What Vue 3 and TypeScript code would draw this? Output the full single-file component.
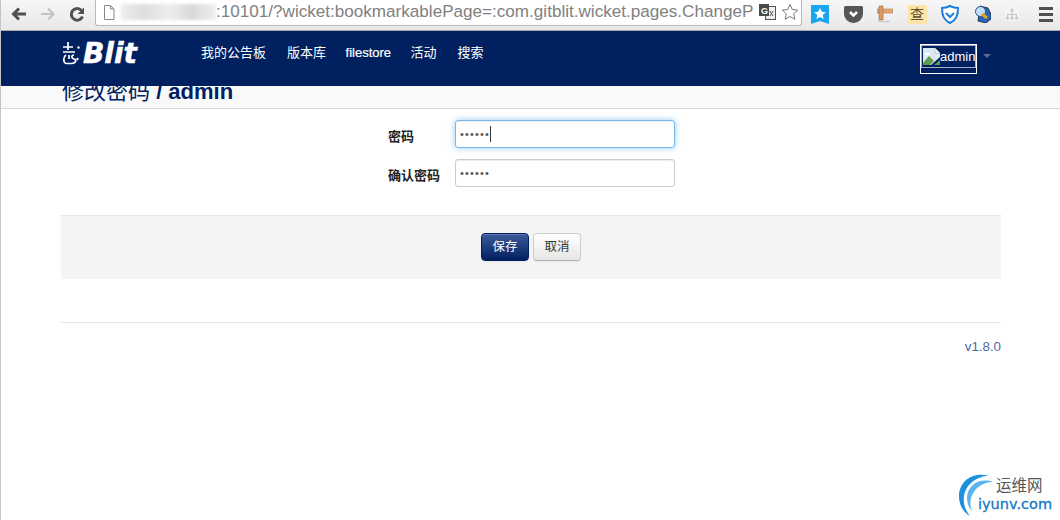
<script setup lang="ts">
const navItems: string[] = ['我的公告板', '版本库', 'filestore', '活动', '搜索']
</script>

<template>
  <div class="page">
    <div class="toolbar">
      <div class="navbtns">
        <svg width="20" height="20" viewBox="0 0 20 20"><path d="M17 10H5M10 4.500 4.500 10l5.500 5.500" fill="none" stroke="#505050" stroke-width="3"/></svg>
        <svg width="20" height="20" viewBox="0 0 20 20"><path d="M3 10h12M10 4.500l5.500 5.500-5.500 5.500" fill="none" stroke="#c4c4c4" stroke-width="2.200"/></svg>
        <svg width="20" height="20" viewBox="0 0 20 20"><path d="M15.500 12.500a5.800 5.800 0 1 1-1-6" fill="none" stroke="#505050" stroke-width="3"/><path d="M17 3.500v6.500h-6.500z" fill="#505050"/></svg>
      </div>
      <div class="omnibox">
        <svg class="page-ico" width="12" height="15" viewBox="0 0 12 15"><path d="M1.500.5h6l3.500 3.500v10.500h-9.500zM7.500.5V4H11" fill="#fff" stroke="#888"/></svg>
        <span class="blur"></span>
        <span class="url">:10101/?wicket:bookmarkablePage=:com.gitblit.wicket.pages.ChangeP</span>
        <svg class="trans" width="17" height="16" viewBox="0 0 17 16"><rect x="6.500" y="2.500" width="10" height="13" fill="#eee" stroke="#555"/><rect x="0" y="0" width="10" height="12" fill="#4a4a4a"/><text x="2" y="9.500" font-size="9" font-weight="bold" fill="#fff" font-family="Liberation Sans">G</text><path d="M11 7l3 5M14 7l-3 5" stroke="#555"/></svg>
        <svg class="star" width="18" height="18" viewBox="0 0 18 18"><path d="m9 1.500 2.300 5 5.400.6-4 3.700 1.100 5.400L9 13.500l-4.800 2.700 1.100-5.400-4-3.700 5.400-.6z" fill="#fff" stroke="#777"/></svg>
      </div>
      <div class="exts">
        <svg width="18" height="19" viewBox="0 0 18 19"><path d="M0 0h18v19l-9-3-9 3z" fill="#1aa7f0"/><path d="m9 3 1.800 3.700 4 .5-3 2.800.8 4L9 12l-3.600 2 .8-4-3-2.800 4-.5z" fill="#fff"/></svg>
        <svg width="19" height="17" viewBox="0 0 19 17"><path d="M1.500 0h16A1.500 1.500 0 0 1 19 1.500V8a9.500 9 0 0 1-19 0V1.500A1.500 1.500 0 0 1 1.500 0z" fill="#555"/><path d="m6 6 3.500 3.500L13 6" fill="none" stroke="#fff" stroke-width="2.500"/></svg>
        <svg width="16" height="18" viewBox="0 0 16 18"><path d="M0 4h16v4H0z" fill="#e0a878" stroke="#b07840" stroke-width=".6"/><path d="M2 1h4v14H2z" fill="#d99a62" stroke="#a8683a" stroke-width=".6"/><path d="M1 16.500h12" stroke="#ccc" stroke-width="1.500"/></svg>
        <span class="cha">查</span>
        <svg width="18" height="19" viewBox="0 0 18 19"><path d="M9 1c3 1.500 5 2 8 2 0 8-2 12-8 15C3 15 1 11 1 3c3 0 5-.5 8-2z" fill="#fff" stroke="#1b7fe0" stroke-width="2"/><path d="m5 8 4 4 4-4" fill="none" stroke="#1b7fe0" stroke-width="2"/></svg>
        <svg width="17" height="18" viewBox="0 0 17 18"><path d="M6 1l8 2 3 6v5l-5 4-8-2z" fill="#2a63b5" stroke="#123" stroke-width=".8"/><circle cx="6.500" cy="6.500" r="5" fill="#bfe0f5" stroke="#26508a"/><path d="m8 9 5 4" stroke="#e8a020" stroke-width="3"/></svg>
        <svg width="14" height="14" viewBox="0 0 14 14"><rect width="14" height="14" rx="2" fill="#f4f4f4"/><path d="M7 3v4M2.500 10V7.500h9V10M7 7v3" fill="none" stroke="#c4c4c4"/><circle cx="7" cy="3" r="1.500" fill="#c4c4c4"/><circle cx="2.500" cy="11" r="1.500" fill="#c4c4c4"/><circle cx="7" cy="11" r="1.500" fill="#c4c4c4"/><circle cx="11.500" cy="11" r="1.500" fill="#c4c4c4"/></svg>
        <span class="burger"><i></i><i></i><i></i></span>
      </div>
    </div>

    <nav class="navbar">
      <div class="brand">
        <svg class="mark" width="19" height="26" viewBox="0 0 19 26" fill="none" stroke="#fff" stroke-width="1.700">
          <path d="M6 1v8M1 6h10M1 11h12"/>
          <path d="M4 14C1 16 1 21 4 22.500M7 14v4M12 14c-3 .5-3 3 0 4 3 1 2 4-2 4.500H4"/>
          <circle cx="16.500" cy="6.500" r="1.200" fill="#fff" stroke="none"/>
          <circle cx="15.500" cy="18" r="1.200" fill="#fff" stroke="none"/>
        </svg>
        <span class="blit">Blit</span>
      </div>
      <ul class="menu">
        <li v-for="item in navItems" :key="item">{{ item }}</li>
      </ul>
      <div class="user">
        <div class="avatar">
          <div class="broken">
            <svg width="17" height="17" viewBox="0 0 17 17"><path d="M0 0h12l5 5v4L8 17H0z" fill="#dbe8f6"/><path d="M0 15 6 8l5 5-4 4H0z" fill="#5f9e48"/><path d="M12 0v5h5z" fill="#fff" stroke="#999" stroke-width=".5"/><path d="M2 5h5v2H2z" fill="#fff"/><path d="M17 12v5h-6z" fill="#5f9e48"/></svg><span>admin</span>
          </div>
        </div>
        <span class="caret"></span>
      </div>
    </nav>

    <header class="subhead">
      <h2 class="title">修改密码 <strong>/ admin</strong></h2>
    </header>

    <main class="content">
      <form class="form" @submit.prevent>
        <div class="row">
          <label>密码</label>
          <div class="input focus">••••••<span class="cursor"></span></div>
        </div>
        <div class="row">
          <label>确认密码</label>
          <div class="input">••••••</div>
        </div>
        <div class="actions">
          <button class="btn primary">保存</button>
          <button class="btn">取消</button>
        </div>
      </form>
      <footer class="foot">v1.8.0</footer>
    </main>

    <div class="watermark">
      <svg width="44" height="46" viewBox="0 0 44 46"><path d="M33 4C16 -1 3 10 3 24c0 9 4 16 11 20C9 38 7 31 8 24 10 12 21 4 33 4z" fill="#1e90e0"/><path d="M37 10C24 5 11 13 11 26c0 5 2 10 5 13-2-5-2-9-1-13C18 16 27 10 37 10z" fill="#5ab4ee"/></svg>
      <div class="wm-text">
        <span class="wm-cn">运维网</span>
        <span class="wm-en">iyunv.com</span>
      </div>
    </div>
  </div>
</template>

<style>
html, body { margin: 0; background: #fff; }
</style>

<style scoped>
.page {
  position: relative;
  width: 1060px;
  height: 520px;
  overflow: hidden;
  background: #fff;
  box-sizing: border-box;
  border-left: 1px solid #c4c4c4;
  font-family: "Liberation Sans", "Noto Sans CJK SC", sans-serif;
}
.toolbar {
  height: 31px;
  box-sizing: border-box;
  margin-left: -1px;
  display: flex;
  align-items: center;
  padding: 0 9px 2px 9px;
  background: linear-gradient(#f6f6f6, #e8e8e8);
  border-bottom: 1px solid #a9a9a9;
}
.navbtns { display: flex; gap: 9px; width: 86px; flex: none; }
.omnibox {
  width: 707px;
  height: 27px;
  flex: none;
  margin-top: -3px;
  box-sizing: border-box;
  display: flex;
  align-items: center;
  background: #fff;
  border: 1px solid #b9b9b9;
  border-top: 0;
  border-radius: 0 0 3px 3px;
  padding: 0 3px 0 7px;
  overflow: hidden;
}
.page-ico { flex: none; }
.blur {
  width: 95px;
  height: 16px;
  flex: none;
  margin-left: 6px;
  background: linear-gradient(90deg, #eee, #ddd, #eee, #d8d8d8, #eee);
  filter: blur(1.500px);
}
.url {
  font-size: 17.100px;
  color: #808080;
  white-space: nowrap;
  width: 540px;
  flex: none;
  overflow: hidden;
  line-height: 22px;
  font-family: "Liberation Sans", sans-serif;
}
.trans { margin: 0 5px 0 3px; flex: none; }
.star { flex: none; }
.exts {
  display: flex;
  align-items: center;
  gap: 14.500px;
  padding-left: 9px;
}
.exts > svg, .exts > span { flex: none; }
.cha {
  width: 19px;
  height: 19px;
  background: #fce5a8;
  color: #5a5030;
  font-size: 14px;
  line-height: 19px;
  text-align: center;
}
.burger { display: flex; flex-direction: column; gap: 3px; width: 14px; margin-left: 5px; }
.burger i { display: block; height: 3px; background: #505050; }

.navbar {
  height: 55px;
  margin-left: -1px;
  background: #002060;
  display: flex;
  align-items: center;
  padding-left: 62px;
  color: #fff;
}
.brand {
  width: 139px;
  display: flex;
  align-items: center;
  gap: 2px;
  margin-top: -10px;
  white-space: nowrap;
}
.mark { flex: none; }
.blit {
  font-family: "DejaVu Sans", sans-serif;
  font-size: 28px;
  line-height: 30px;
  font-weight: bold;
  font-style: italic;
  color: #fff;
  -webkit-text-stroke: .5px #fff;
}
.menu {
  list-style: none;
  margin: -11px 0 0;
  padding: 0;
  display: flex;
  gap: 21px;
  font-size: 13px;
  line-height: 18px;
}
.menu li:nth-child(3) { margin: 0 -1.500px; -webkit-text-stroke: .2px #fff; }
.user {
  margin-left: auto;
  margin-right: 69px;
  display: flex;
  align-items: flex-start;
  gap: 6px;
}
.avatar {
  width: 57px;
  height: 30px;
  box-sizing: border-box;
  border: 1px solid #fff;
}
.broken {
  width: 55px;
  height: 23px;
  box-sizing: border-box;
  border: 1px solid #a8aec0;
  display: flex;
  align-items: center;
  padding-left: 1px;
  font-size: 13px;
  overflow: hidden;
}
.broken svg { flex: none; margin-right: 0; }
.caret {
  margin-top: 10px;
  width: 0;
  height: 0;
  border-left: 4px solid transparent;
  border-right: 4px solid transparent;
  border-top: 4px solid #5a6a90;
}
.subhead {
  height: 22px;
  overflow: hidden;
  margin-left: -1px;
  background: #f9f9f9;
  border-bottom: 1px solid #d8d8d8;
  padding-left: 62px;
}
.title {
  margin: -7px 0 0;
  font-size: 22px;
  line-height: 26px;
  font-weight: normal;
  color: #002060;
}
.title strong { font-weight: bold; }

.content {
  width: 940px;
  margin-left: 60px;
}
.form { padding-top: 11px; }
.row {
  display: flex;
  align-items: center;
  height: 28px;
  margin-bottom: 11px;
  padding-left: 327px;
}
.row label {
  width: 67px;
  font-size: 13px;
  line-height: 18px;
  font-weight: bold;
  color: #222;
  margin-top: 5px;
}
.input {
  width: 220px;
  height: 28px;
  box-sizing: border-box;
  border: 1px solid #ccc;
  border-radius: 3px;
  padding: 0 0 0 4px;
  display: flex;
  align-items: center;
  font-size: 11px;
  letter-spacing: 1.150px;
  color: #555;
  box-shadow: inset 0 1px 1px rgba(0, 0, 0, .075);
}
.focus {
  border-color: rgba(82, 168, 236, .8);
  box-shadow: inset 0 1px 1px rgba(0, 0, 0, .075), 0 0 6px rgba(82, 168, 236, .6);
}
.cursor { width: 1px; height: 16px; background: #333; }
.actions {
  margin-top: 28px;
  height: 46px;
  padding-top: 17px;
  background: #f4f4f4;
  border-top: 1px solid #e5e5e5;
  display: flex;
  justify-content: center;
  align-items: flex-start;
  gap: 4px;
}
.btn {
  width: 48px;
  height: 28px;
  padding: 0 0 1px;
  font: 12.500px/18px "Liberation Sans", "Noto Sans CJK SC", sans-serif;
  color: #333;
  border: 1px solid #ccc;
  border-bottom-color: #b3b3b3;
  border-radius: 4px;
  background: linear-gradient(#fff, #e6e6e6);
  box-shadow: inset 0 1px 0 rgba(255, 255, 255, .2), 0 1px 2px rgba(0, 0, 0, .05);
}
.primary {
  color: #fff;
  border-color: #002060;
  background: linear-gradient(#3b5a99, #002060);
}
.foot {
  margin-top: 43px;
  border-top: 1px solid #e5e5e5;
  padding-top: 15px;
  text-align: right;
  font-size: 13.300px;
  line-height: 18px;
  color: #4a6aa5;
}
.watermark {
  position: absolute;
  right: 2px;
  bottom: 2px;
  width: 102px;
  height: 46px;
}
.watermark svg { position: absolute; left: 0; top: 0; }
.wm-text { position: absolute; left: 22px; top: 4px; width: 80px; }
.wm-cn { display: block; margin-left: 18px; font-size: 15.500px; line-height: 20px; color: #555; }
.wm-en { display: block; margin-top: -1px; font-size: 14.500px; line-height: 18px; color: #1478c8; -webkit-text-stroke: .3px #1478c8; font-family: "DejaVu Sans", sans-serif; }
</style>
